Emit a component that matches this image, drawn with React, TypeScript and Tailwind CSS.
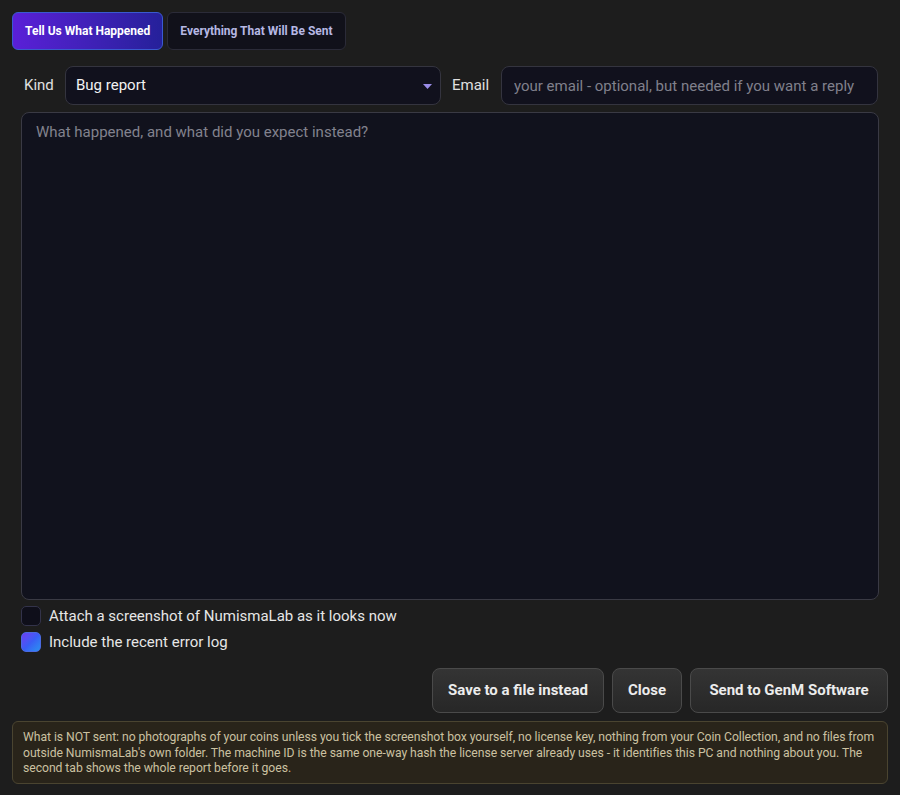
import React, { useState } from "react";

const font = { fontFamily: "Roboto, 'Noto Sans', sans-serif" };

const tabOn =
  "h-[38px] px-[12px] rounded-md border border-[#3a5ad0] bg-gradient-to-r from-[#5a1fd8] to-[#25209a] text-white text-[12px] font-bold";
const tabOff =
  "h-[38px] px-[12px] rounded-md border border-[#2b2b38] bg-[#11111a] text-[#b6b8e4] text-[12px] font-bold";

const boxOn =
  "w-[20px] h-[20px] rounded-[5px] bg-gradient-to-br from-[#6a3cf0] via-[#3a5cf5] to-[#2a90f0] border border-[#4a6ae0]";
const boxOff = "w-[20px] h-[20px] rounded-[5px] bg-[#0f0f1a] border border-[#33334a]";

const btn =
  "h-[45px] rounded-lg border border-[#4a4a4a] bg-gradient-to-b from-[#343434] to-[#272727] text-[15px] font-bold text-[#ececec]";

const App = () => {
  const [tab, setTab] = useState(0);
  const [shot, setShot] = useState(false);
  const [log, setLog] = useState(true);

  return (
    <div className="w-[900px] h-[795px] bg-[#1d1d1d] text-[#e6e6e6] flex flex-col" style={font}>
      {/* Tabs */}
      <div className="flex gap-1 px-3 pt-3">
        <button onClick={() => setTab(0)} className={tab === 0 ? tabOn : tabOff}>
          Tell Us What Happened
        </button>
        <button onClick={() => setTab(1)} className={tab === 1 ? tabOn : tabOff}>
          Everything That Will Be Sent
        </button>
      </div>

      {/* Kind + Email */}
      <div className="flex items-center mt-[16px] pl-[24px] pr-[22px]">
        <span className="text-[15px] text-[#e0e0e0] w-[41px]">Kind</span>
        <div className="relative w-[376px] h-[39px] rounded-lg border border-[#34343f] bg-[#11111d] flex items-center pl-[10px]">
          <span className="text-[15px] text-[#f2f2f2]">Bug report</span>
          <svg className="absolute right-[8px] top-[17px]" width="9" height="5" viewBox="0 0 9 5">
            <path d="M0 0 L9 0 L4.5 5 Z" fill="#9a8ce8" />
          </svg>
        </div>
        <span className="text-[15px] text-[#e0e0e0] ml-[11px] w-[49px]">Email</span>
        <input
          className="flex-1 h-[39px] rounded-lg border border-[#34343f] bg-[#11111d] px-[12px] text-[15px] text-[#f2f2f2] placeholder:text-[#80808c] outline-none"
          placeholder="your email - optional, but needed if you want a reply"
        />
      </div>

      {/* Description */}
      <textarea
        className="mx-[21px] mt-[7px] w-[858px] h-[488px] resize-none rounded-lg border border-[#3a3a44] bg-[#11121d] px-[14px] pt-[8px] pb-[10px] text-[15px] text-[#f2f2f2] placeholder:text-[#82828e] outline-none"
        placeholder="What happened, and what did you expect instead?"
      />

      {/* Options */}
      <div className="flex flex-col gap-[6px] mt-[6px] pl-[21px]">
        <label className="flex items-center gap-[8px] leading-[19px] cursor-pointer" onClick={() => setShot(!shot)}>
          <span className={shot ? boxOn : boxOff} />
          <span className="text-[15px] text-[#e6e6e6]">Attach a screenshot of NumismaLab as it looks now</span>
        </label>
        <label className="flex items-center gap-[8px] leading-[19px] cursor-pointer" onClick={() => setLog(!log)}>
          <span className={log ? boxOn : boxOff} />
          <span className="text-[15px] text-[#e6e6e6]">Include the recent error log</span>
        </label>
      </div>

      {/* Actions */}
      <div className="flex justify-end gap-[8px] mt-[16px] pr-[12px]">
        <button className={btn + " w-[172px]"}>Save to a file instead</button>
        <button className={btn + " w-[70px]"}>Close</button>
        <button className={btn + " w-[198px]"}>Send to GenM Software</button>
      </div>

      {/* Privacy note */}
      <div className="mx-[12px] mt-[8px] rounded-md border border-[#4a4430] bg-[#29241a] pl-[10px] pr-[4px] pt-[8px] pb-[6px] text-[12.2px] leading-[15.5px] tracking-[-0.05px] text-[#cbc1a1]">
        What is NOT sent: no photographs of your coins unless you tick the screenshot box yourself, no license key, nothing from your Coin Collection, and no files from outside NumismaLab's own folder. The machine ID is the same one-way hash the license server already uses - it identifies this PC and nothing about you. The second tab shows the whole report before it goes.
      </div>
    </div>
  );
};

export default App;
